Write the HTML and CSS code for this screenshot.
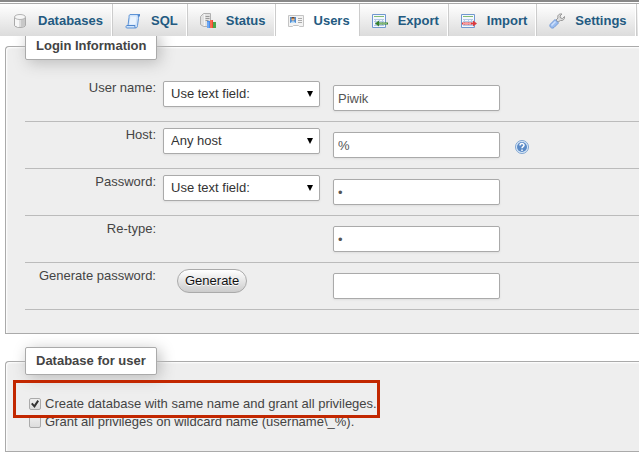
FILE: index.html
```html
<!DOCTYPE html>
<html lang="en">
<head>
<meta charset="utf-8">
<title>Users</title>
<link rel="stylesheet" href="styles.css">
</head>
<body>
<nav class="tabs">
  <a class="tab" href="#databases">
    <svg class="icon" viewBox="0 0 16 16"><path d="M2.500 4v8c0 3.300 11 3.300 11 0V4" fill="#dedede" stroke="#aaa"/><path d="M4 5v8M6 6v8" stroke="#fff" stroke-width="1.500"/><path d="M10 6v8M12 5v8" stroke="#c8c8c8" stroke-width="2"/><ellipse cx="8" cy="4" rx="5.500" ry="2.500" fill="#f6f6f6" stroke="#b5b5b5"/></svg>
    Databases</a>
  <a class="tab" href="#sql">
    <svg class="icon" viewBox="0 0 16 16"><path d="M5 1.500h10c-2 1-1.500 2-1.500 4l-1 7c0 2-1 2.500-2.500 2.500H1.500c-1-1-.5-2.500.5-2.500h1l1-8c0-1.500 0-2.500 1-3z" fill="#cfe3fa" stroke="#5d93d6"/><path d="M5.500 3.500h6l-1 8h-6z" fill="#e9f3fe"/><path d="M2 12.500h8c-.5 1 0 2 .5 2.500" fill="none" stroke="#4f86cc"/><path d="M12.500 2l2.500-.5v2h-2z" fill="#4f86cc"/></svg>
    SQL</a>
  <a class="tab" href="#status">
    <svg class="icon" viewBox="0 0 16 16"><path d="M.5 3.500l3-3h7v11l-3 2h-4l-3-2z" fill="#e2e2e2" stroke="#b0b0b0"/><path d="M4.500 1v12" stroke="#f4f4f4"/><path d="M5.500 3.500h4M5.500 5.500h4M5.500 7.500h3" stroke="#999"/><path d="M7 8h3v7H7z" fill="#4c8fe8"/><path d="M10 7h3v8h-3z" fill="#ef4a32"/><path d="M13 9h3v6h-3z" fill="#4aa548"/><path d="M8 9v6" stroke="#8fc0ff"/><path d="M11 7v8" stroke="#ff8b68"/></svg>
    Status</a>
  <a class="tab tab-active" href="#users">
    <svg class="icon" viewBox="0 0 16 16"><path d="M.5 2.500h15v11h-4l-1-1h-5l-1 1h-4z" fill="#f3f3f3" stroke="#c4c4c4"/><path d="M2 4h6v6H2z" fill="#4d8dd3"/><circle cx="5" cy="6" r="1.700" fill="#f0b77f"/><path d="M3.300 5.500c0-2 3.400-2 3.400 0z" fill="#6a4226"/><path d="M2.500 10c.5-2.500 4.500-2.500 5 0z" fill="#bcdcf7"/><path d="M10 5.500h4M10 7.500h4M10 9.500h4" stroke="#aaa"/></svg>
    Users</a>
  <a class="tab" href="#export">
    <svg class="icon" viewBox="0 0 16 16"><path d="M.5 1.500h13v13H.5z" fill="#f4f8fd" stroke="#7098cf"/><path d="M2 3.500h10" stroke="#83bd73"/><path d="M2 6.500h10M2 8.500h10M2 12.500h10M3.500 6v7M7.500 6v7M10.500 6v7" stroke="#b4c9e6"/><path d="M3 10.500l4-3v2h9v2H7v2z" fill="#34802e"/><path d="M7 10.500h8" stroke="#82b875"/></svg>
    Export</a>
  <a class="tab" href="#import">
    <svg class="icon" viewBox="0 0 16 16"><path d="M.5 1.500h13v13H.5z" fill="#f4f8fd" stroke="#7098cf"/><path d="M2 3.500h10" stroke="#83bd73"/><path d="M2 6.500h10M2 8.500h10M2 12.500h10M3.500 6v7M7.500 6v7M10.500 6v7" stroke="#b4c9e6"/><path d="M16 10.500l-4-3v2H1v2h11v2z" fill="#dc3a3e"/><path d="M2 10.500h8" stroke="#ff9d9d"/></svg>
    Import</a>
  <a class="tab" href="#settings">
    <svg class="icon" viewBox="0 0 16 16"><path d="M7 7l2-2c-1-2.500 1-4.500 4-4l-2 2 .5 2 2 .5 2-2c.5 3-2 4.500-4 4L9 9z" fill="#ddd" stroke="#999"/><path d="M6 6.500L1.500 11c-2 2 1 5.500 3.500 3.500L9.500 10z" fill="#9abdf0" stroke="#7399d6"/><path d="M6.500 8.500l-4 4" stroke="#cfe1fb" stroke-width="1.500"/></svg>
    Settings</a>
  <span class="tab-rest"></span>
</nav>

<form>
  <fieldset class="panel login">
    <legend>Login Information</legend>
    <div class="row">
      <label class="name" for="username">User name:</label>
      <span class="choice"><select id="user-mode" aria-label="User name source"><option>Use text field:</option><option>Any user</option></select></span>
      <input class="field" type="text" id="username" value="Piwik">
    </div>
    <div class="row">
      <label class="name" for="hostname">Host:</label>
      <span class="choice"><select id="host-mode" aria-label="Host source"><option>Any host</option><option>Local</option></select></span>
      <input class="field" type="text" id="hostname" value="%">
      <a class="help" href="#help" aria-label="Help"><svg class="help-icon" viewBox="0 0 14 14"><circle cx="7" cy="7" r="6.500" fill="#dcebfa" stroke="#7fa4d0"/><circle cx="7" cy="7" r="5" fill="#5b8ac6"/><path d="M5 5.500c0-2.500 4-2.500 4-.2C9 6.700 7 6.600 7 8.200M7 9.500v1.500" fill="none" stroke="#fff" stroke-width="1.500"/></svg></a>
    </div>
    <div class="row">
      <label class="name" for="password">Password:</label>
      <span class="choice"><select id="password-mode" aria-label="Password source"><option>Use text field:</option><option>No Password</option></select></span>
      <input class="field" type="password" id="password" value="p">
    </div>
    <div class="row">
      <label class="name" for="retype">Re-type:</label>
      <span class="choice"></span>
      <input class="field" type="password" id="retype" value="p">
    </div>
    <div class="row">
      <label class="name" for="generated">Generate password:</label>
      <span class="choice"><button class="generate" type="button">Generate</button></span>
      <input class="field" type="text" id="generated">
    </div>
  </fieldset>

  <fieldset class="panel database">
    <legend>Database for user</legend>
    <div class="highlight"></div>
    <label class="check"><input type="checkbox" checked>Create database with same name and grant all privileges.</label>
    <label class="check"><input type="checkbox">Grant all privileges on wildcard name (username\_%).</label>
  </fieldset>
</form>
</body>
</html>
```

FILE: styles.css
```css
* {
  box-sizing: border-box;
}

body {
  margin: 0;
  overflow: hidden;
  background: #fff;
  color: #444;
  font: 13px/18px "Liberation Sans", Arial, sans-serif;
}

.tabs {
  position: relative;
  z-index: 1;
  display: flex;
  border-top: 2px solid #888;
  box-shadow: inset 0 1px #fff, inset 0 2px #aaa;
  padding-top: 2px;
  background: #fff;
}

.tab,
.tab-rest {
  height: 32px;
  border-left: 1px solid #ccc;
  border-right: 1px solid #fff;
  background: linear-gradient(#fff, #dcdcdc);
}

.tab {
  display: flex;
  flex: none;
  align-items: center;
  gap: 10px;
  padding: 1px 8px 0 12px;
  color: #235a81;
  font-weight: bold;
  text-decoration: none;
}

.tab:first-child {
  border-left: 0;
}

.tab-active {
  background: #fff;
}

.tab-rest {
  flex: 1;
}

.icon {
  width: 16px;
  height: 16px;
}

.panel {
  position: relative;
  min-width: 0;
  margin: 0 0 13px 5px;
  border: 1px solid #aaa;
  border-right: 0;
  border-radius: 4px 0 0 0;
  background: #eee;
  box-shadow: inset 1px 1px 2px #fff;
}

.login {
  margin-top: -4px;
  padding: 15px 0 23px 19px;
}

.database {
  padding: 20px 0 20px 19px;
}

legend {
  padding: 4px 10px;
  border: 1px solid #aaa;
  border-radius: 2px;
  background: #fff;
  box-shadow: 3px 3px 15px #bbb;
  font-weight: bold;
}

.row {
  display: flex;
  align-items: flex-start;
  height: 47px;
  border-bottom: 1px solid #bbb;
}

.name {
  width: 131px;
  margin-right: 7px;
  padding-top: 4px;
  text-align: right;
}

.choice {
  position: relative;
  width: 157px;
  margin: 6px 13px 0 0;
}

.choice:has(select)::after {
  content: "";
  position: absolute;
  top: 10px;
  right: 7px;
  width: 6px;
  height: 6px;
  background: #000;
  clip-path: polygon(0 0, 100% 0, 50% 100%);
  pointer-events: none;
}

select,
.field {
  height: 26px;
  border: 1px solid #aaa;
  border-radius: 2px;
  background: #fff;
  box-shadow: 0 1px 2px #ddd;
  font: inherit;
}

select {
  display: block;
  width: 100%;
  padding: 0 7px;
  appearance: none;
  color: #333;
}

.field {
  width: 167px;
  margin-top: 10px;
  padding: 0 4px;
  color: #555;
}

.help {
  margin: 18px 0 0 15px;
}

.help-icon {
  display: block;
  width: 14px;
  height: 14px;
}

.generate {
  display: block;
  height: 24px;
  margin-left: 14px;
  padding: 0 7px;
  border: 1px solid #aaa;
  border-radius: 12px;
  background: linear-gradient(#fff, #ccc);
  color: #111;
  font: inherit;
  text-shadow: 0 1px #fff;
}

.check {
  display: flex;
  align-items: center;
  gap: 3px;
  width: max-content;
  margin-left: 4px;
}

.check input {
  display: grid;
  place-items: center;
  width: 12px;
  height: 12px;
  margin: 0 1px 0 0;
  appearance: none;
  border: 1px solid #aaa;
  border-radius: 2px;
  background: linear-gradient(#eee, #ddd);
}

.check input:checked::before {
  content: "";
  width: 8px;
  height: 8px;
  background: #333;
  clip-path: polygon(0 50%, 20% 35%, 40% 60%, 80% 0, 100% 15%, 45% 100%);
}

.highlight {
  position: absolute;
  top: 5px;
  left: 7px;
  width: 367px;
  height: 38px;
  border: 3px solid #c22700;
}
```
